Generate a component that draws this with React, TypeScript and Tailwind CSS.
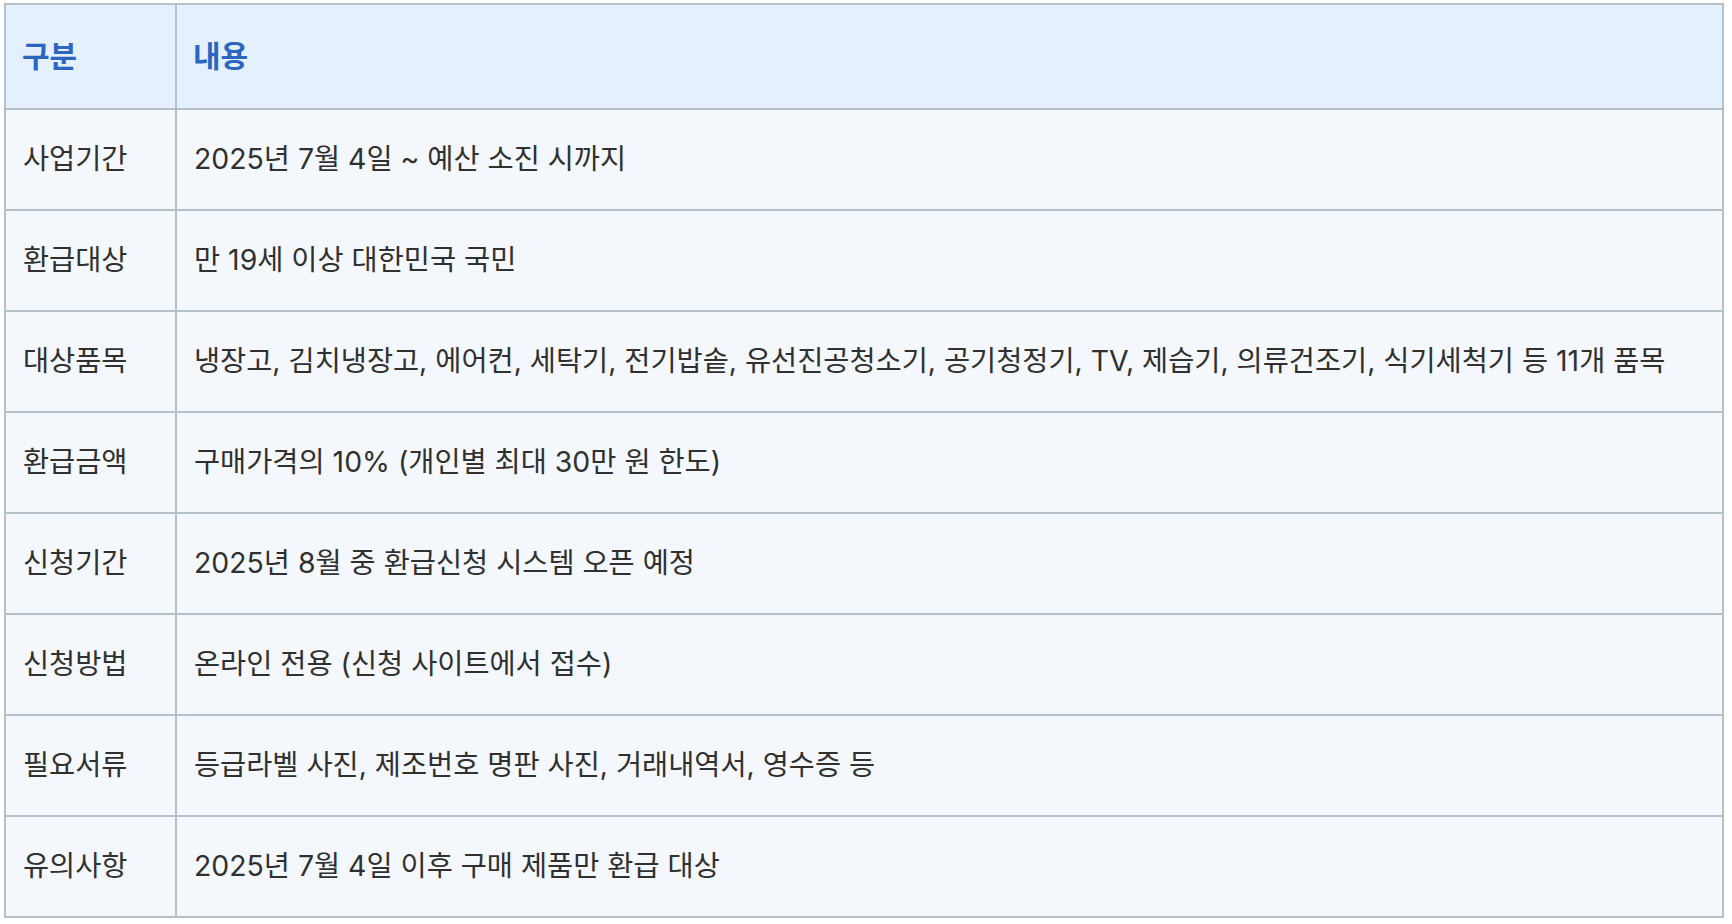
import React from 'react';

const ROWS: [string, string][] = [
  ['사업기간', '2025년 7월 4일 ~ 예산 소진 시까지'],
  ['환급대상', '만 19세 이상 대한민국 국민'],
  ['대상품목', '냉장고, 김치냉장고, 에어컨, 세탁기, 전기밥솥, 유선진공청소기, 공기청정기, TV, 제습기, 의류건조기, 식기세척기 등 11개 품목'],
  ['환급금액', '구매가격의 10% (개인별 최대 30만 원 한도)'],
  ['신청기간', '2025년 8월 중 환급신청 시스템 오픈 예정'],
  ['신청방법', '온라인 전용 (신청 사이트에서 접수)'],
  ['필요서류', '등급라벨 사진, 제조번호 명판 사진, 거래내역서, 영수증 등'],
  ['유의사항', '2025년 7월 4일 이후 구매 제품만 환급 대상'],
];

const App: React.FC = () => {
  return (
    <div className="min-h-screen bg-white pt-[3px] pl-[4px] font-['Inter','Noto_Sans_CJK_KR',sans-serif]">
      <table className="w-[1720px] border-collapse border-2 border-[#b4c1c9] text-[28.4px] text-[#303030]">
        <thead>
          <tr className="h-[105px] bg-[#e4f1fc]">
            <th className="w-[171px] border-2 border-[#b4c1c9] px-[16px] text-left text-[30px] font-bold text-[#2c66c2]">구분</th>
            <th className="border-2 border-[#b4c1c9] px-[16px] text-left text-[30px] font-bold text-[#2c66c2]">내용</th>
          </tr>
        </thead>
        <tbody>
          {ROWS.map(([label, value]) => (
            <tr key={label} className="h-[101px] bg-[#f4f8fd]">
              <td className="border-2 border-[#b4c1c9] px-[17px]">{label}</td>
              <td className="border-2 border-[#b4c1c9] px-[17px]">{value}</td>
            </tr>
          ))}
        </tbody>
      </table>
    </div>
  );
};

export default App;
